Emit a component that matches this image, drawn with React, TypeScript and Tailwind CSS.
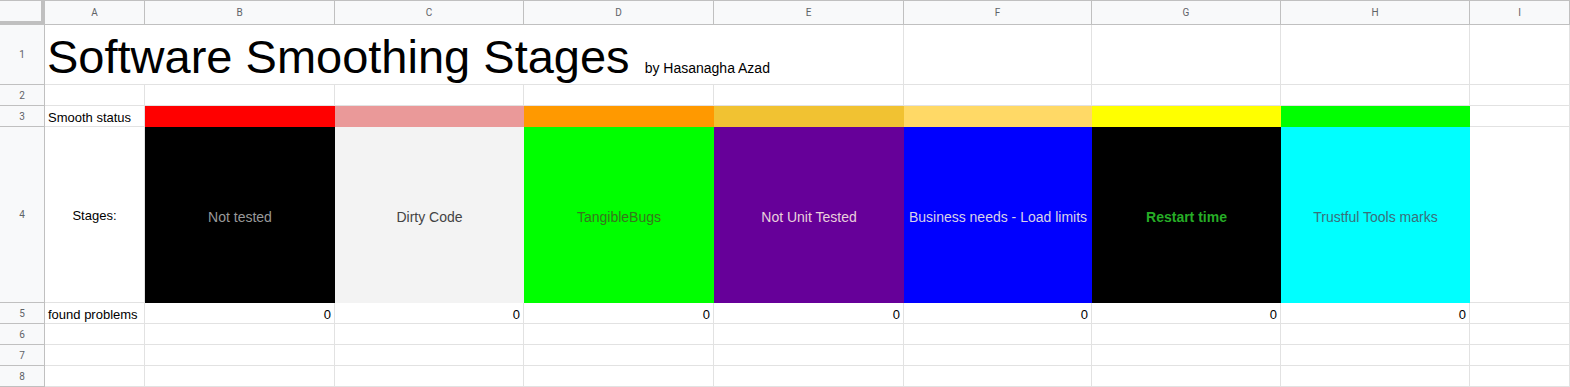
const columns = ['A', 'B', 'C', 'D', 'E', 'F', 'G', 'H', 'I']

const statusColors = ['bg-[#ff0000]', 'bg-[#ea9999]', 'bg-[#ff9900]', 'bg-[#f1c232]', 'bg-[#ffd966]', 'bg-[#ffff00]', 'bg-[#00ff00]']

const stages = [
  { label: 'Not tested', cell: 'bg-black', text: 'text-[#999999]' },
  { label: 'Dirty Code', cell: 'bg-[#f3f3f3]', text: 'text-[#434343]' },
  { label: 'TangibleBugs', cell: 'bg-[#00ff00]', text: 'text-[#38761d]' },
  { label: 'Not Unit Tested', cell: 'bg-[#660099]', text: 'text-[#ead1dc]' },
  { label: 'Business needs - Load limits', cell: 'bg-[#0000ff]', text: 'text-[#d9d2e9] whitespace-nowrap' },
  { label: 'Restart time', cell: 'bg-black', text: 'text-[#26ad26] font-bold' },
  { label: 'Trustful Tools marks', cell: 'bg-[#00ffff]', text: 'text-[#3a6f7a]' },
]

const RowHead = ({ n }: { n: number }) => (
  <div className="flex items-center justify-center bg-[#f8f9fa] border-r border-b border-[#c0c0c0] font-['Roboto',sans-serif] text-[10px] text-[#5f6368]">
    {n}
  </div>
)

const Blank = () => <div className="border-r border-b border-[#e2e2e2] bg-white" />

const EmptyRow = ({ n }: { n: number }) => (
  <>
    <RowHead n={n} />
    {columns.map((c) => (
      <Blank key={c} />
    ))}
  </>
)

export default function App() {
  return (
    <div className="w-[1570px] h-[387px] overflow-hidden bg-white font-['Liberation_Sans',Arial,sans-serif] text-black">
      <div className="grid grid-cols-[45px_100px_190px_189px_190px_190px_188px_189px_189px_100px] grid-rows-[25px_60px_21px_21px_176px_21px_21px_21px_21px]">
        {/* column headers */}
        <div className="bg-[#f8f9fa] border-t border-r-4 border-b-4 border-[#c0c0c0]" />
        {columns.map((c) => (
          <div
            key={c}
            className="flex items-center justify-center bg-[#f8f9fa] border-t border-r border-b border-[#c0c0c0] font-['Roboto',sans-serif] text-[10px] text-[#5f6368]"
          >
            {c}
          </div>
        ))}

        {/* row 1 */}
        <RowHead n={1} />
        <div className="col-span-5 border-r border-b border-[#e2e2e2] overflow-visible whitespace-nowrap">
          <div className="flex items-baseline pl-[2px] pt-[8px] leading-none">
            <span className="text-[47px]">Software Smoothing Stages</span>
            <span className="ml-[15px] text-[14px]">by Hasanagha Azad</span>
          </div>
        </div>
        <Blank />
        <Blank />
        <Blank />
        <Blank />

        {/* row 2 */}
        <EmptyRow n={2} />

        {/* row 3 */}
        <RowHead n={3} />
        <div className="flex items-end pl-[3px] pb-[1px] border-r border-b border-[#e2e2e2] text-[13px] leading-[15px] whitespace-nowrap">
          Smooth status
        </div>
        {statusColors.map((bg) => (
          <div key={bg} className={`${bg}`} />
        ))}
        <Blank />

        {/* row 4 */}
        <RowHead n={4} />
        <div className="flex items-center justify-center pt-[3px] border-r border-b border-[#e2e2e2] text-[13px]">
          Stages:
        </div>
        {stages.map((s) => (
          <div key={s.label} className={`flex items-center justify-center pt-[4px] text-[14px] ${s.cell}`}>
            <span className={s.text}>{s.label}</span>
          </div>
        ))}
        <Blank />

        {/* row 5 */}
        <RowHead n={5} />
        <div className="flex items-end pl-[3px] pb-[1px] border-r border-b border-[#e2e2e2] text-[13px] leading-[15px] whitespace-nowrap">
          found problems
        </div>
        {stages.map((s) => (
          <div
            key={s.label}
            className="flex items-end justify-end pr-[3px] pb-[1px] border-r border-b border-[#e2e2e2] text-[13px] leading-[15px]"
          >
            0
          </div>
        ))}
        <Blank />

        <EmptyRow n={6} />
        <EmptyRow n={7} />
        <EmptyRow n={8} />
      </div>
    </div>
  )
}
